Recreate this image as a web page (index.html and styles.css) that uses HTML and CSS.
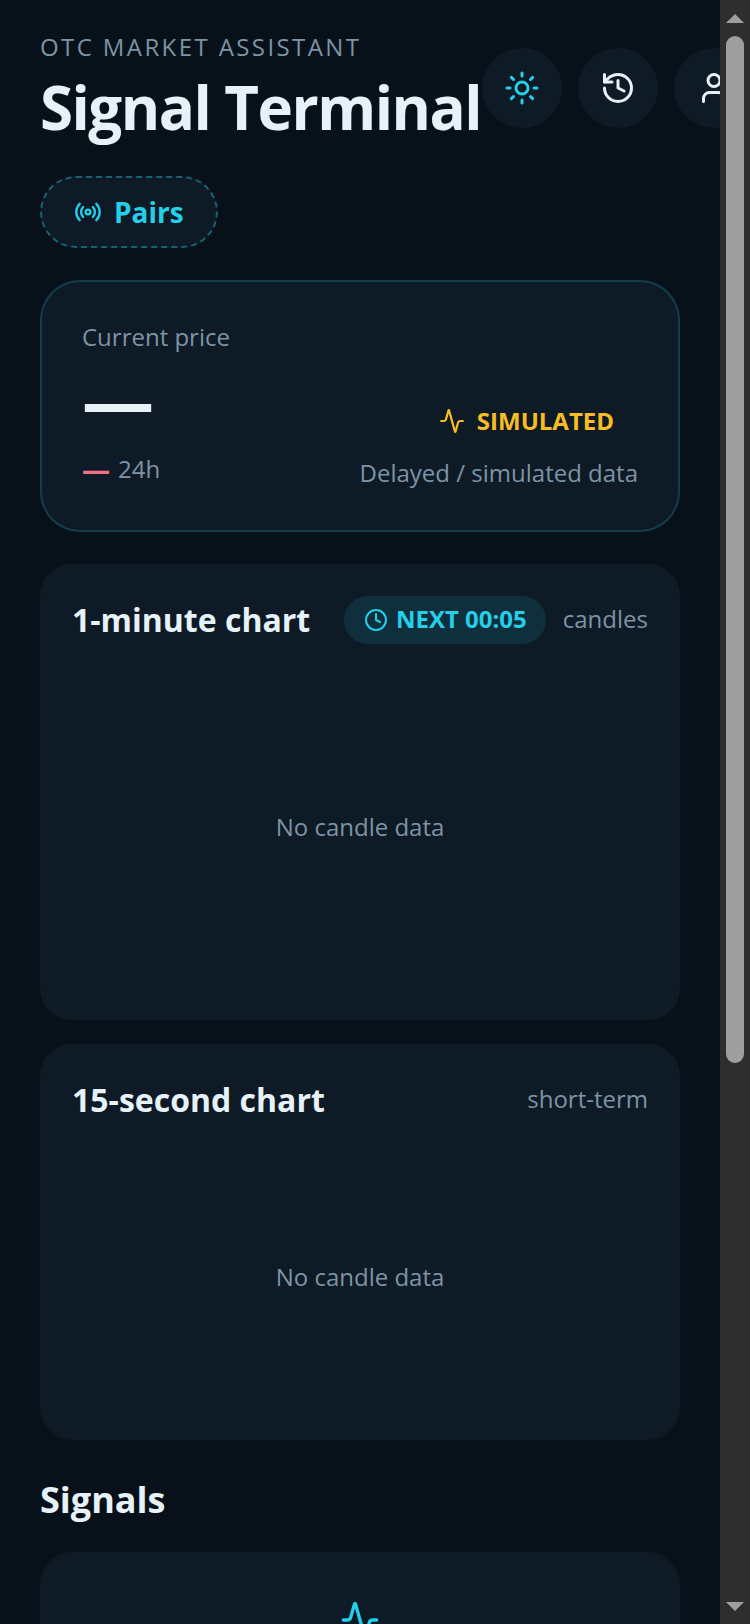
FILE: index.html
```html
<!DOCTYPE html>
<html lang="en">
<head>
<meta charset="utf-8">
<title>Signal Terminal</title>
<link rel="stylesheet" href="styles.css">
</head>
<body>
<main class="app">
  <header class="top">
    <div class="brand">
      <div class="eyebrow">OTC MARKET ASSISTANT</div>
      <h1 class="title">Signal Terminal</h1>
    </div>
    <div class="actions">
      <button class="round cyan" type="button"><svg class="ico36" viewBox="0 0 24 24"><circle cx="12" cy="12" r="4"/><path d="M12 2v2M12 20v2M4.93 4.93l1.41 1.41M17.66 17.66l1.41 1.41M2 12h2M20 12h2M6.34 17.66l-1.41 1.41M19.07 4.93l-1.41 1.41"/></svg></button>
      <button class="round white" type="button"><svg class="ico36" viewBox="0 0 24 24"><path d="M3 12a9 9 0 1 0 9-9 9.75 9.75 0 0 0-6.74 2.74L3 8"/><path d="M3 3v5h5"/><path d="M12 7v5l4 2"/></svg></button>
      <button class="round white" type="button"><svg class="ico36" viewBox="0 0 24 24"><path d="M19 21v-2a4 4 0 0 0-4-4H9a4 4 0 0 0-4 4v2"/><circle cx="12" cy="7" r="4"/></svg></button>
    </div>
  </header>

  <button class="pairs" type="button"><svg class="ico28" viewBox="0 0 24 24"><path d="M4.9 19.1C1 15.2 1 8.8 4.9 4.9"/><path d="M7.8 16.2c-2.3-2.3-2.3-6.1 0-8.5"/><circle cx="12" cy="12" r="2"/><path d="M16.2 7.8c2.3 2.3 2.3 6.1 0 8.5"/><path d="M19.1 4.9C23 8.8 23 15.1 19.1 19"/></svg><span>Pairs</span></button>

  <section class="hero">
    <div class="hero-left">
      <div class="muted">Current price</div>
      <div class="price">—</div>
      <div class="change"><span class="down">—</span><span class="muted">24h</span></div>
    </div>
    <div class="hero-right">
      <div class="sim"><svg class="ico26" viewBox="0 0 24 24"><path d="M22 12h-2.48a2 2 0 0 0-1.93 1.46l-2.35 8.36a.25.25 0 0 1-.48 0L9.24 2.18a.25.25 0 0 0-.48 0l-2.35 8.36A2 2 0 0 1 4.49 12H2"/></svg><span>SIMULATED</span></div>
      <div class="muted">Delayed / simulated data</div>
    </div>
  </section>

  <section class="card">
    <div class="card-head">
      <h2 class="card-title">1-minute chart</h2>
      <div class="head-right">
        <div class="next"><svg class="ico24" viewBox="0 0 24 24"><circle cx="12" cy="12" r="10"/><path d="M12 6v6l4 2"/></svg><span>NEXT 00:05</span></div>
        <span class="muted head-note">candles</span>
      </div>
    </div>
    <div class="plot plot-tall muted">No candle data</div>
  </section>

  <section class="card">
    <div class="card-head">
      <h2 class="card-title">15-second chart</h2>
      <span class="muted head-note">short-term</span>
    </div>
    <div class="plot plot-short muted">No candle data</div>
  </section>

  <h2 class="section-title">Signals</h2>
  <section class="card empty">
    <svg class="ico40" viewBox="0 0 24 24"><path d="M22 12h-2.48a2 2 0 0 0-1.93 1.46l-2.35 8.36a.25.25 0 0 1-.48 0L9.24 2.18a.25.25 0 0 0-.48 0l-2.35 8.36A2 2 0 0 1 4.49 12H2"/></svg>
  </section>
</main>
<aside class="scrollbar" aria-hidden="true">
  <div class="arrow-box"><span class="arrow-up"></span></div>
  <div class="track"><div class="thumb"></div></div>
  <div class="arrow-box"><span class="arrow-down"></span></div>
</aside>
</body>
</html>
```

FILE: styles.css
```css
* { box-sizing: border-box; }
html { background: #08111a; }

body {
  margin: 0;
  height: 1624px;
  display: flex;
  overflow: hidden;
  background: #08111a;
  color: #e6f1f8;
  font-family: "Open Sans", "Liberation Sans", sans-serif;
  font-size: 24px;
  line-height: 1.5;
}
.app { padding: 29px 40px 48px; width: 720px; flex: none; overflow: hidden; }

.scrollbar { width: 30px; flex: none; background: #2e2e2e; display: flex; flex-direction: column; height: 1624px; }
.arrow-box { height: 36px; flex: none; display: flex; align-items: center; justify-content: center; }
.arrow-up { border-left: 9px solid transparent; border-right: 9px solid transparent; border-bottom: 9px solid #9e9e9e; }
.arrow-down { border-left: 9px solid transparent; border-right: 9px solid transparent; border-top: 9px solid #9e9e9e; }
.track { flex: 1; display: flex; justify-content: center; align-items: flex-start; }
.thumb { width: 18px; height: 1027px; border-radius: 9px; background: #9e9e9e; }

svg { fill: none; stroke: currentColor; stroke-width: 2; stroke-linecap: round; stroke-linejoin: round; flex: none; display: block; }
.ico24 { width: 24px; height: 24px; }
.ico26 { width: 26px; height: 26px; }
.ico28 { width: 28px; height: 28px; }
.ico36 { width: 36px; height: 36px; }
.ico40 { width: 40px; height: 40px; color: #24cfe9; }

.top { display: flex; align-items: flex-start; gap: 1px; }
.brand { flex: none; }
.eyebrow { font-size: 24px; line-height: 36px; letter-spacing: 2.4px; color: #7d94a5; }
.title { margin: 6px 0 0; font-size: 60px; line-height: 72px; font-weight: 700; color: #e6f1f8; letter-spacing: -1.5px; white-space: nowrap; }
.actions { display: flex; gap: 16px; flex: none; margin-top: 19px; }
.round { width: 80px; height: 80px; border: 0; border-radius: 50%; background: #0e1a25; display: flex; align-items: center; justify-content: center; padding: 0; }
.cyan { color: #24cfe9; }
.white { color: #e6f1f8; }

.pairs {
  display: flex; align-items: center; gap: 12px;
  margin-top: 33px; height: 72px; width: 178px; padding: 0 32px;
  background: #0e1a25; color: #24cfe9;
  border: 2px dashed rgba(36, 207, 233, .4); border-radius: 36px;
  font: 700 28px/1.5 "Open Sans", "Liberation Sans", sans-serif;
}

.hero {
  display: flex; justify-content: space-between; align-items: flex-start;
  margin-top: 32px; height: 252px; padding: 37px 40px 39px;
  background: #0e1a25; border: 2px solid rgba(36, 207, 233, .2); border-radius: 40px;
}
.muted { color: #7d94a5; font-size: 24px; line-height: 36px; }
.hero-left { display: flex; flex-direction: column; }
.price { font-size: 72px; font-weight: 700; line-height: 84px; margin-top: 2px; color: #e6f1f8; }
.change { display: flex; align-items: center; gap: 8px; margin-top: 10px; }
.down { color: #f56f86; font-size: 28px; line-height: 36px; font-weight: 700; }
.hero-right { display: flex; flex-direction: column; align-items: flex-end; gap: 16px; align-self: flex-end; }
.sim { display: flex; align-items: center; gap: 12px; margin-right: 24px; color: #f9bd24; font-weight: 700; font-size: 24px; line-height: 36px; }

.card { margin-top: 32px; padding: 32px; background: #0e1a25; border-radius: 32px; }
.card + .card { margin-top: 24px; }
.card-head { display: flex; align-items: center; justify-content: space-between; height: 48px; }
.card-title { margin: 0; font-size: 32px; line-height: 48px; font-weight: 700; color: #e6f1f8; }
.head-right { display: flex; align-items: center; gap: 17px; }
.head-note { padding-bottom: 2px; }
.next { display: flex; align-items: center; gap: 8px; height: 48px; padding: 0 19px 2px 20px; border-radius: 24px; background: rgba(36, 207, 233, .12); color: #24cfe9; font-weight: 700; font-size: 24px; line-height: 36px; }
.next svg { margin-top: 2px; }
.plot { display: flex; align-items: center; justify-content: center; margin-top: 22px; }
.plot-tall { height: 322px; }
.plot-short { height: 262px; }

.section-title { margin: 33px 0 0; font-size: 36px; line-height: 54px; font-weight: 700; color: #e6f1f8; }
.section-title + .card { margin-top: 25px; }
.empty { display: flex; justify-content: center; padding: 48px; height: 300px; }
```
